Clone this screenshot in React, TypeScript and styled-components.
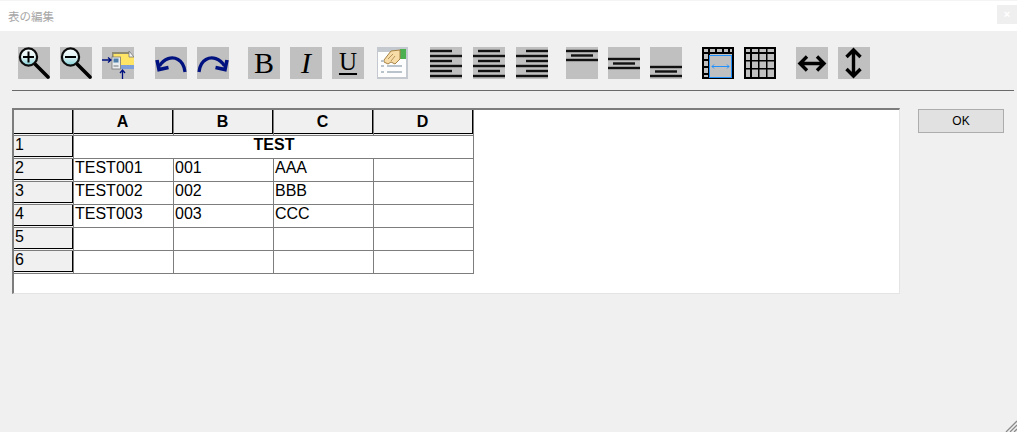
import { ReactNode } from 'react';
import styled, { createGlobalStyle } from 'styled-components';

const Global = createGlobalStyle`
  html, body {
    margin: 0;
    padding: 0;
    background: #f0f0f0;
  }
  body {
    font-family: "Liberation Sans", Arial, "Noto Sans CJK JP", sans-serif;
  }
`;

const St = {
  Dialog: styled.div`
    position: relative;
    width: 1017px;
    height: 432px;
    overflow: hidden;
    background: #f0f0f0;
  `,
  TitleBar: styled.div`
    height: 30px;
    border-top: 1px solid #f4f4f4;
    background: #fff;
    display: flex;
    align-items: center;
    justify-content: space-between;
    padding-left: 8px;
  `,
  Title: styled.span`
    font-family: "Noto Sans CJK JP", sans-serif;
    font-size: 11.5px;
    color: #a6a6a6;
    margin-top: -1px;
  `,
  CloseButton: styled.div`
    width: 20px;
    height: 19px;
    margin-top: -3px;
    background: #efefef;
    color: #fff;
    font-size: 11px;
    font-weight: bold;
    line-height: 18px;
    text-align: center;
  `,
  Toolbar: styled.div`
    display: flex;
    height: 32px;
    padding: 16px 0 0 18px;
  `,
  Group: styled.div<{ $gap: number; $left?: number }>`
    display: flex;
    gap: ${(p) => p.$gap}px;
    margin-left: ${(p) => p.$left ?? 0}px;
  `,
  ToolButton: styled.div<{ $plain?: boolean }>`
    width: 32px;
    height: 32px;
    background: ${(p) => (p.$plain ? 'transparent' : '#c0c0c0')};
    svg {
      display: block;
    }
  `,
  Divider: styled.div`
    height: 1px;
    margin: 11px 3px 0 12px;
    background: #6a6a6a;
  `,
  Body: styled.div`
    display: flex;
    align-items: flex-start;
    padding: 17px 13px 0 12px;
  `,
  Sheet: styled.div`
    width: 885px;
    height: 183px;
    background: #fff;
    border-top: 2px solid #7d7d7d;
    border-left: 2px solid #7d7d7d;
    border-right: 1px solid #e4e4e4;
    border-bottom: 1px solid #e4e4e4;
  `,
  Table: styled.table`
    border-collapse: separate;
    border-spacing: 0;
    table-layout: fixed;
    width: 460px;
    font-size: 16px;
    color: #000;
  `,
  Head: styled.th<{ $corner?: boolean }>`
    width: ${(p) => (p.$corner ? 60 : 100)}px;
    height: 26px;
    padding: 0 2px 2px 0;
    background: #f0f0f0;
    font-weight: bold;
    text-align: center;
    box-sizing: border-box;
    border-right: 1px solid #7d7d7d;
    border-bottom: 1px solid #7d7d7d;
    box-shadow: inset 0 -1px 0 #f4f4f4, inset -1px -2px 0 #000;
  `,
  RowHead: styled.td`
    height: 23px;
    padding: 0 0 0 1px;
    background: #f0f0f0;
    box-sizing: border-box;
    text-align: left;
    line-height: 18px;
    vertical-align: top;
    border-right: 1px solid #7d7d7d;
    border-bottom: 1px solid #7d7d7d;
    box-shadow: inset 0 -1px 0 #f4f4f4, inset -1px -2px 0 #000;
  `,
  Cell: styled.td<{ $title?: boolean }>`
    height: 23px;
    padding: 0 0 0 1px;
    box-sizing: border-box;
    line-height: 18px;
    vertical-align: top;
    text-align: ${(p) => (p.$title ? 'center' : 'left')};
    font-weight: ${(p) => (p.$title ? 'bold' : 'normal')};
    border-right: 1px solid #7d7d7d;
    border-bottom: 1px solid #7d7d7d;
  `,
  OkButton: styled.button`
    width: 86px;
    height: 24px;
    margin: 1px 0 0 18px;
    padding: 0;
    background: #e1e1e1;
    border: 1px solid #adadad;
    font-family: "Liberation Sans", Arial, sans-serif;
    font-size: 12px;
    color: #000;
  `,
  Grip: styled.svg`
    position: absolute;
    right: 0;
    bottom: 0;
  `,
};

const Icon = ({ children }: { children: ReactNode }) => (
  <svg width="32" height="32" viewBox="0 0 32 32">
    {children}
  </svg>
);

const Magnifier = ({ minus }: { minus?: boolean }) => (
  <Icon>
    <defs>
      <linearGradient id={minus ? 'lensB' : 'lensA'} x1="0" y1="0" x2="0" y2="1">
        <stop offset="0" stopColor="#f6fbfb" />
        <stop offset="0.5" stopColor="#e2f3f4" />
        <stop offset="1" stopColor="#7fced6" />
      </linearGradient>
    </defs>
    <line x1="17" y1="17" x2="30" y2="30" stroke="#000" strokeWidth="3.600" strokeLinecap="round" />
    <circle cx="10.500" cy="10" r="8.600" fill={`url(#${minus ? 'lensB' : 'lensA'})`} stroke="#0c0c0c" strokeWidth="2.200" />
    <line x1="5" y1="10" x2="16" y2="10" stroke="#000" strokeWidth="2" />
    {!minus && <line x1="10.500" y1="4.500" x2="10.500" y2="15.500" stroke="#000" strokeWidth="2" />}
  </Icon>
);

const ImportIcon = () => (
  <Icon>
    <path d="M10 5h17l5 5v12H10z" fill="#ffe566" />
    <path d="M10 5h17v2H10zM10 5h1.500v17H10z" fill="#8e8a70" />
    <path d="M27 4l5 6h-5z" fill="#f2f2f2" stroke="#777" strokeWidth="0.800" />
    <rect x="19" y="18" width="13" height="4" fill="#7f9fd8" />
    <rect x="10" y="10" width="8.500" height="12" fill="#e9edf0" stroke="#777" strokeWidth="0.800" />
    <rect x="11.500" y="11.500" width="5" height="4" fill="#4f7fa8" />
    <rect x="11.500" y="18.500" width="5" height="1" fill="#777" />
    <path d="M0 13h9M6 10.500l3 2.500-3 2.500" fill="none" stroke="#00107e" strokeWidth="1.300" />
    <path d="M20.500 32V23M18 26l2.500-3 2.500 3" fill="none" stroke="#00107e" strokeWidth="1.300" />
  </Icon>
);

const UndoIcon = ({ flip }: { flip?: boolean }) => (
  <Icon>
    <g transform={flip ? 'translate(32 0) scale(-1 1)' : undefined} fill="none" stroke="#00127f">
      <path d="M4.500 19C9 11.500 17 9 23 12.500c4.500 2.500 6.500 7.500 7 12.500" strokeWidth="3.200" />
      <path d="M2 13l2 9.500 9.500-2" strokeWidth="3.600" />
    </g>
  </Icon>
);

const Letter = styled.div<{ $italic?: boolean; $underline?: boolean }>`
  height: 32px;
  line-height: 32px;
  text-align: center;
  font-family: "Liberation Serif", "Times New Roman", serif;
  font-size: 30px;
  color: #000;
  font-style: ${(p) => (p.$italic ? 'italic' : 'normal')};
  ${(p) => p.$underline && 'font-size: 25px; line-height: 30px; text-decoration: underline; text-decoration-thickness: 2px; text-underline-offset: 3px;'}
`;

const NoteIcon = () => (
  <Icon>
    <rect x="0" y="0" width="31" height="32" fill="#c4c9cf" />
    <rect x="1" y="5" width="28" height="25" fill="#fdfdfd" />
    <rect x="23" y="2" width="6" height="10" fill="#4caf50" />
    <path d="M7 13l7-9 9-1v9l-5 5-4-2-3 2-4-2z" fill="#f7dca8" stroke="#a58245" strokeWidth="1" />
    <path d="M11 12l5-5M14 14l4-5" stroke="#a58245" strokeWidth="0.800" />
    <g fill="#b9c3cc">
      <rect x="4" y="13" width="3" height="2" />
      <rect x="4" y="18" width="3" height="2" />
      <rect x="4" y="24" width="3" height="2" />
      <rect x="10" y="18" width="15" height="2" />
      <rect x="10" y="24" width="15" height="2" />
    </g>
  </Icon>
);

const Line = ({ x, y, w }: { x: number; y: number; w: number }) => (
  <>
    <rect x={x} y={y - 0.5} width={w} height="3" fill="#777" />
    <rect x={x} y={y} width={w} height="2" fill="#111" />
  </>
);

const AlignIcon = ({ mode }: { mode: 'left' | 'center' | 'right' }) => {
  const ys = [3, 8, 13, 18, 23, 28];
  return (
    <Icon>
      {ys.map((y, i) => {
        const short = i % 2 === 0;
        const x1 = !short ? 0 : mode === 'left' ? 0 : mode === 'center' ? 5 : 10;
        const w = short ? 22 : 32;
        return <Line key={y} x={x1} y={y} w={w} />;
      })}
    </Icon>
  );
};

const VAlignIcon = ({ top }: { top: number }) => (
  <Icon>
    <Line x={0} y={top} w={32} />
    <Line x={5} y={top + 4.5} w={22} />
    <Line x={0} y={top + 9} w={32} />
  </Icon>
);

const GridFrame = ({ children }: { children?: ReactNode }) => (
  <Icon>
    <rect x="1" y="1" width="30" height="30" fill="#c0c0c0" stroke="#000" strokeWidth="2" />
    <rect x="0" y="5" width="32" height="2" fill="#000" />
    <rect x="6" y="0" width="2" height="32" fill="#000" />
    {children}
  </Icon>
);

const ColWidthIcon = () => (
  <GridFrame>
    <rect x="13" y="0" width="2" height="6" fill="#000" />
    <rect x="20" y="0" width="2" height="6" fill="#000" />
    <rect x="26" y="0" width="2" height="6" fill="#000" />
    <rect x="0" y="12" width="7" height="2" fill="#000" />
    <rect x="0" y="19" width="7" height="2" fill="#000" />
    <rect x="0" y="26" width="7" height="2" fill="#000" />
    <rect x="7.500" y="8.500" width="22" height="22" fill="#c0c0c0" stroke="#1e90ff" strokeWidth="1" />
    <rect x="0" y="31" width="32" height="1" fill="#000" />
    <path d="M10 19.500h17M12 17.500l-2 2 2 2M25 17.500l2 2-2 2" fill="none" stroke="#1e90ff" strokeWidth="1" />
  </GridFrame>
);

const GridIcon = () => (
  <GridFrame>
    <rect x="14" y="0" width="1.500" height="32" fill="#000" />
    <rect x="22" y="0" width="1.500" height="32" fill="#000" />
    <rect x="0" y="13" width="32" height="1.500" fill="#000" />
    <rect x="0" y="21" width="32" height="1.500" fill="#000" />
  </GridFrame>
);

const ArrowH = () => (
  <Icon>
    <path d="M4 16.500h24M11 9.500l-7 7 7 7M21 9.500l7 7-7 7" fill="none" stroke="#000" strokeWidth="3.400" />
  </Icon>
);

const ArrowV = () => (
  <Icon>
    <path d="M15.500 3v26M8.500 10l7-7 7 7M8.500 22l7 7 7-7" fill="none" stroke="#000" strokeWidth="3.400" />
  </Icon>
);

const columns = ['A', 'B', 'C', 'D'];
const rows = [
  ['TEST001', '001', 'AAA', ''],
  ['TEST002', '002', 'BBB', ''],
  ['TEST003', '003', 'CCC', ''],
  ['', '', '', ''],
  ['', '', '', ''],
];

const App = () => {
  return (
    <St.Dialog>
      <Global />
      <St.TitleBar>
        <St.Title>表の編集</St.Title>
        <St.CloseButton>×</St.CloseButton>
      </St.TitleBar>
      <St.Toolbar>
        <St.Group $gap={10}>
          <St.ToolButton><Magnifier /></St.ToolButton>
          <St.ToolButton><Magnifier minus /></St.ToolButton>
          <St.ToolButton><ImportIcon /></St.ToolButton>
        </St.Group>
        <St.Group $gap={10} $left={21}>
          <St.ToolButton><UndoIcon /></St.ToolButton>
          <St.ToolButton><UndoIcon flip /></St.ToolButton>
        </St.Group>
        <St.Group $gap={10} $left={19}>
          <St.ToolButton><Letter>B</Letter></St.ToolButton>
          <St.ToolButton><Letter $italic>I</Letter></St.ToolButton>
          <St.ToolButton><Letter $underline>U</Letter></St.ToolButton>
        </St.Group>
        <St.Group $gap={11} $left={13}>
          <St.ToolButton $plain><NoteIcon /></St.ToolButton>
        </St.Group>
        <St.Group $gap={11} $left={21}>
          <St.ToolButton><AlignIcon mode="left" /></St.ToolButton>
          <St.ToolButton><AlignIcon mode="center" /></St.ToolButton>
          <St.ToolButton><AlignIcon mode="right" /></St.ToolButton>
        </St.Group>
        <St.Group $gap={10} $left={18}>
          <St.ToolButton><VAlignIcon top={3} /></St.ToolButton>
          <St.ToolButton><VAlignIcon top={11} /></St.ToolButton>
          <St.ToolButton><VAlignIcon top={19} /></St.ToolButton>
        </St.Group>
        <St.Group $gap={10} $left={20}>
          <St.ToolButton><ColWidthIcon /></St.ToolButton>
          <St.ToolButton><GridIcon /></St.ToolButton>
        </St.Group>
        <St.Group $gap={10} $left={20}>
          <St.ToolButton><ArrowH /></St.ToolButton>
          <St.ToolButton><ArrowV /></St.ToolButton>
        </St.Group>
      </St.Toolbar>
      <St.Divider />
      <St.Body>
        <St.Sheet>
          <St.Table>
            <thead>
              <tr>
                <St.Head $corner />
                {columns.map((c) => (
                  <St.Head key={c}>{c}</St.Head>
                ))}
              </tr>
            </thead>
            <tbody>
              <tr>
                <St.RowHead>1</St.RowHead>
                <St.Cell $title colSpan={4}>TEST</St.Cell>
              </tr>
              {rows.map((row, i) => (
                <tr key={i}>
                  <St.RowHead>{i + 2}</St.RowHead>
                  {row.map((v, j) => (
                    <St.Cell key={j}>{v}</St.Cell>
                  ))}
                </tr>
              ))}
            </tbody>
          </St.Table>
        </St.Sheet>
        <St.OkButton>OK</St.OkButton>
      </St.Body>
      <St.Grip width="12" height="12" viewBox="0 0 12 12">
        <path d="M1 12L12 1M5 12l7-7M9 12l3-3" stroke="#8a8a8a" strokeWidth="1.300" fill="none" />
      </St.Grip>
    </St.Dialog>
  );
};

export default App;
